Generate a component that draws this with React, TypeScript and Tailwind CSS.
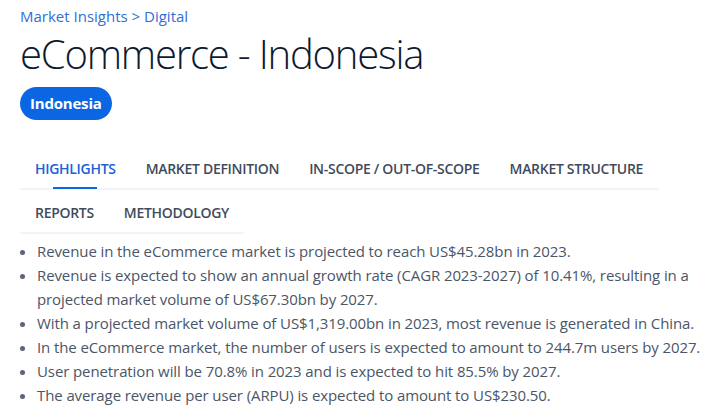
import React from "react";

const tabsRow1 = ["HIGHLIGHTS", "MARKET DEFINITION", "IN-SCOPE / OUT-OF-SCOPE", "MARKET STRUCTURE"];
const tabsRow2 = ["REPORTS", "METHODOLOGY"];

const highlights = [
  "Revenue in the eCommerce market is projected to reach US$45.28bn in 2023.",
  "Revenue is expected to show an annual growth rate (CAGR 2023-2027) of 10.41%, resulting in a projected market volume of US$67.30bn by 2027.",
  "With a projected market volume of US$1,319.00bn in 2023, most revenue is generated in China.",
  "In the eCommerce market, the number of users is expected to amount to 244.7m users by 2027.",
  "User penetration will be 70.8% in 2023 and is expected to hit 85.5% by 2027.",
  "The average revenue per user (ARPU) is expected to amount to US$230.50.",
];

function Tab({ label, active }: { label: string; active?: boolean }) {
  return (
    <div className="relative px-[15px] pt-[7px] pb-[8px]">
      <span
        className={`text-[14px] font-semibold tracking-[-0.3px] ${
          active ? "text-[#1b5fd9]" : "text-[#3f4b5c]"
        }`}
      >
        {label}
      </span>
      {active && (
        <div className="absolute bottom-[-1px] left-1/2 h-[2px] w-[44px] -translate-x-1/2 bg-[#0b66e4]" />
      )}
    </div>
  );
}

export default function App() {
  return (
    <div
      className="h-[413px] w-[728px] overflow-hidden bg-white pl-[20px] pr-[6px] pt-[4px]"
      style={{ fontFamily: '"Open Sans", "Liberation Sans", sans-serif' }}
    >
      <div className="text-[15px] leading-[24px] text-[#2f6fd8]">
        Market Insights &gt; Digital
      </div>
      <h1 className="text-[40px] font-light leading-[52px] tracking-[-1.2px] text-[#0d1a30]">
        eCommerce - Indonesia
      </h1>
      <div className="mt-[7px] inline-flex h-[33px] items-center rounded-full bg-[#0b66e4] px-[10px] text-[15px] font-bold tracking-[-0.2px] text-white">
        Indonesia
      </div>

      <div className="mt-[29px] flex flex-col">
        <div className="flex w-[639px] border-b-[2px] border-[#f1f5fb]">
          {tabsRow1.map((t, i) => (
            <Tab key={t} label={t} active={i === 0} />
          ))}
        </div>
        <div className="mt-[3px] flex w-[224px] border-b-[2px] border-[#f1f5fb]">
          {tabsRow2.map((t) => (
            <Tab key={t} label={t} />
          ))}
        </div>
      </div>

      <ul className="mt-[5px] list-disc pl-[17px] text-[15px] leading-[24px] tracking-[-0.1px] text-[#4a5667] marker:text-[#5a6576]">
        {highlights.map((h) => (
          <li key={h}>{h}</li>
        ))}
      </ul>
    </div>
  );
}
